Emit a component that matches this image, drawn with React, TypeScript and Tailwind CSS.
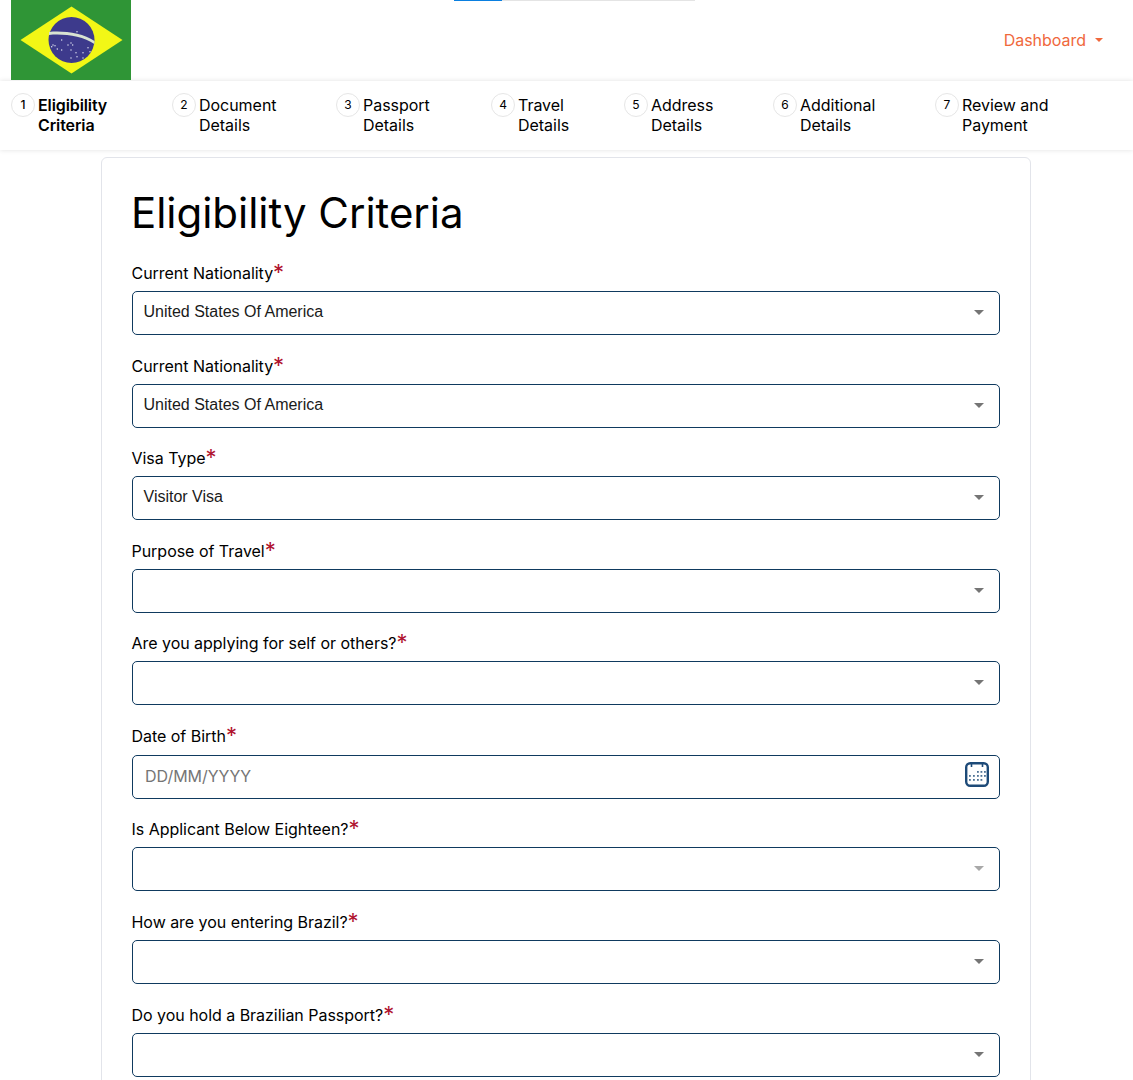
const steps = [
  { n: 1, a: 'Eligibility', b: 'Criteria', w: 'w-[161px]', active: true },
  { n: 2, a: 'Document', b: 'Details', w: 'w-[164px]' },
  { n: 3, a: 'Passport', b: 'Details', w: 'w-[155px]' },
  { n: 4, a: 'Travel', b: 'Details', w: 'w-[133px]' },
  { n: 5, a: 'Address', b: 'Details', w: 'w-[149px]' },
  { n: 6, a: 'Additional', b: 'Details', w: 'w-[162px]' },
  { n: 7, a: 'Review and', b: 'Payment', w: 'w-[150px]' },
];

const fields = [
  { label: 'Current Nationality', value: 'United States Of America' },
  { label: 'Current Nationality', value: 'United States Of America' },
  { label: 'Visa Type', value: 'Visitor Visa' },
  { label: 'Purpose of Travel', value: '' },
  { label: 'Are you applying for self or others?', value: '' },
  { label: 'Date of Birth', date: true, value: '' },
  { label: 'Is Applicant Below Eighteen?', value: '', faded: true },
  { label: 'How are you entering Brazil?', value: '' },
  { label: 'Do you hold a Brazilian Passport?', value: '' },
];

function Flag() {
  const stars = [
    [50.7, 40], [42, 45], [57, 45], [60, 43], [50.7, 50], [60, 50], [65, 52.7], [72, 52.7], [77, 47.7],
    [66, 31.7], [79, 51.7], [72, 58], [66, 56.7], [60, 58], [46.3, 49], [44, 45.7], [40.7, 46.7], [61.7, 45],
  ];
  return (
    <svg width="120" height="80" viewBox="0 0 120 80" className="block">
      <rect width="120" height="80" fill="#2f9536" />
      <polygon points="9.5,40 60.5,6.5 111.5,40 60.5,73.5" fill="#f2f716" />
      <circle cx="60.5" cy="40" r="23" fill="#3d3a8c" />
      <path d="M38 32 C 52 30.5, 72 33, 83.5 41 L 83.3 44 C 72 36, 52 33.5, 38 35 Z" fill="#d9e3d2" />
      {stars.map(([x, y], i) => (
        <circle key={i} cx={x} cy={y} r="0.7" fill="#e6e9f5" />
      ))}
    </svg>
  );
}

function CalendarIcon() {
  return (
    <svg width="24" height="25" viewBox="0 0 24 25" fill="none" className="mb-1">
      <rect x="1.2" y="1.2" width="21.6" height="22.6" rx="4" stroke="#1d4a78" strokeWidth="2.4" />
      <path d="M6.5 1v4M17.5 1v4" stroke="#1d4a78" strokeWidth="1.6" />
      {[[12, 9], [15.5, 9], [19, 9], [4, 13], [8, 13], [12, 13], [15.5, 13], [19, 13], [4, 17], [8, 17], [12, 17], [15.5, 17]].map(
        ([x, y], i) => (
          <rect key={i} x={x} y={y} width="1.8" height="1.8" fill="#4f7396" />
        )
      )}
    </svg>
  );
}

export default function App() {
  return (
    <div className="h-[1080px] overflow-hidden bg-white font-['Inter',sans-serif] text-black tracking-[-0.03px]">

      {/* HEADER */}
      <header className="relative h-[81px] flex items-start justify-between pl-[11px] pr-[30px]">
        <Flag />
        <div className="absolute top-0 left-[454px] w-[241px] h-px bg-[#e4e4e4]">
          <div className="w-[48px] h-px bg-[#0a7fe0]" />
        </div>
        <div className="flex items-center gap-[9px] mt-[30px] text-base leading-5 text-[#f0683c]">
          Dashboard
          <span className="w-0 h-0 border-x-4 border-x-transparent border-t-4 border-t-[#f0683c]" />
        </div>
      </header>

      {/* STEPS */}
      <nav className="h-[69px] flex items-start pl-[11px] pt-[14px] bg-white shadow-[0_0_5px_rgba(0,0,0,0.12)]">
        {steps.map((s) => (
          <div key={s.n} className={`${s.w} flex gap-[3px]`}>
            <div
              className={`w-6 h-6 shrink-0 -mt-[2px] rounded-full border border-[#e6e6e6] flex items-center justify-center text-xs ${
                s.active ? 'font-medium' : ''
              }`}
            >
              {s.n}
            </div>
            <div className={`text-base leading-5 ${s.active ? 'font-semibold tracking-[-0.1px]' : ''}`}>
              {s.a}
              <br />
              {s.b}
            </div>
          </div>
        ))}
      </nav>

      {/* FORM */}
      <main className="mt-[7px] mx-[101px] w-[930px] border border-[#e2e4ea] rounded-md pl-[30px] pr-[30px] pt-[27px] pb-10">
        <h1 className="-ml-px text-[42px] leading-[56px] font-normal mb-[21px]">Eligibility Criteria</h1>
        <div className="flex flex-col gap-[19.6px]">
          {fields.map((f, i) => (
            <div key={i}>
              <div className="h-[29px] -ml-[0.5px] text-base leading-5 pt-px flex items-start">
                <span>{f.label}</span>
                <span className="text-[#b0122e] text-[22px] leading-5 -mt-px">*</span>
              </div>
              {f.date ? (
                <div className="h-11 mt-[0.6px] mb-[0.2px] border border-[#0f3a5f] rounded-[5px] flex items-center justify-between pl-3 pr-[10px]">
                  <span className="text-base text-[#757575] mb-[2px]">DD/MM/YYYY</span>
                  <CalendarIcon />
                </div>
              ) : (
                <div className="h-11 border border-[#0f3a5f] rounded-[5px] flex items-center justify-between pl-[10.5px] pr-[15px]">
                  <span className="font-['Liberation_Sans',sans-serif] tracking-normal text-base text-[#1a1a1a] mb-[2px]">{f.value}</span>
                  <span
                    className={`w-0 h-0 border-x-[5px] border-x-transparent border-t-[5px] mb-px ${
                      f.faded ? 'border-t-[#a8a8a8]' : 'border-t-[#757575]'
                    }`}
                  />
                </div>
              )}
            </div>
          ))}
        </div>
      </main>
    </div>
  );
}
